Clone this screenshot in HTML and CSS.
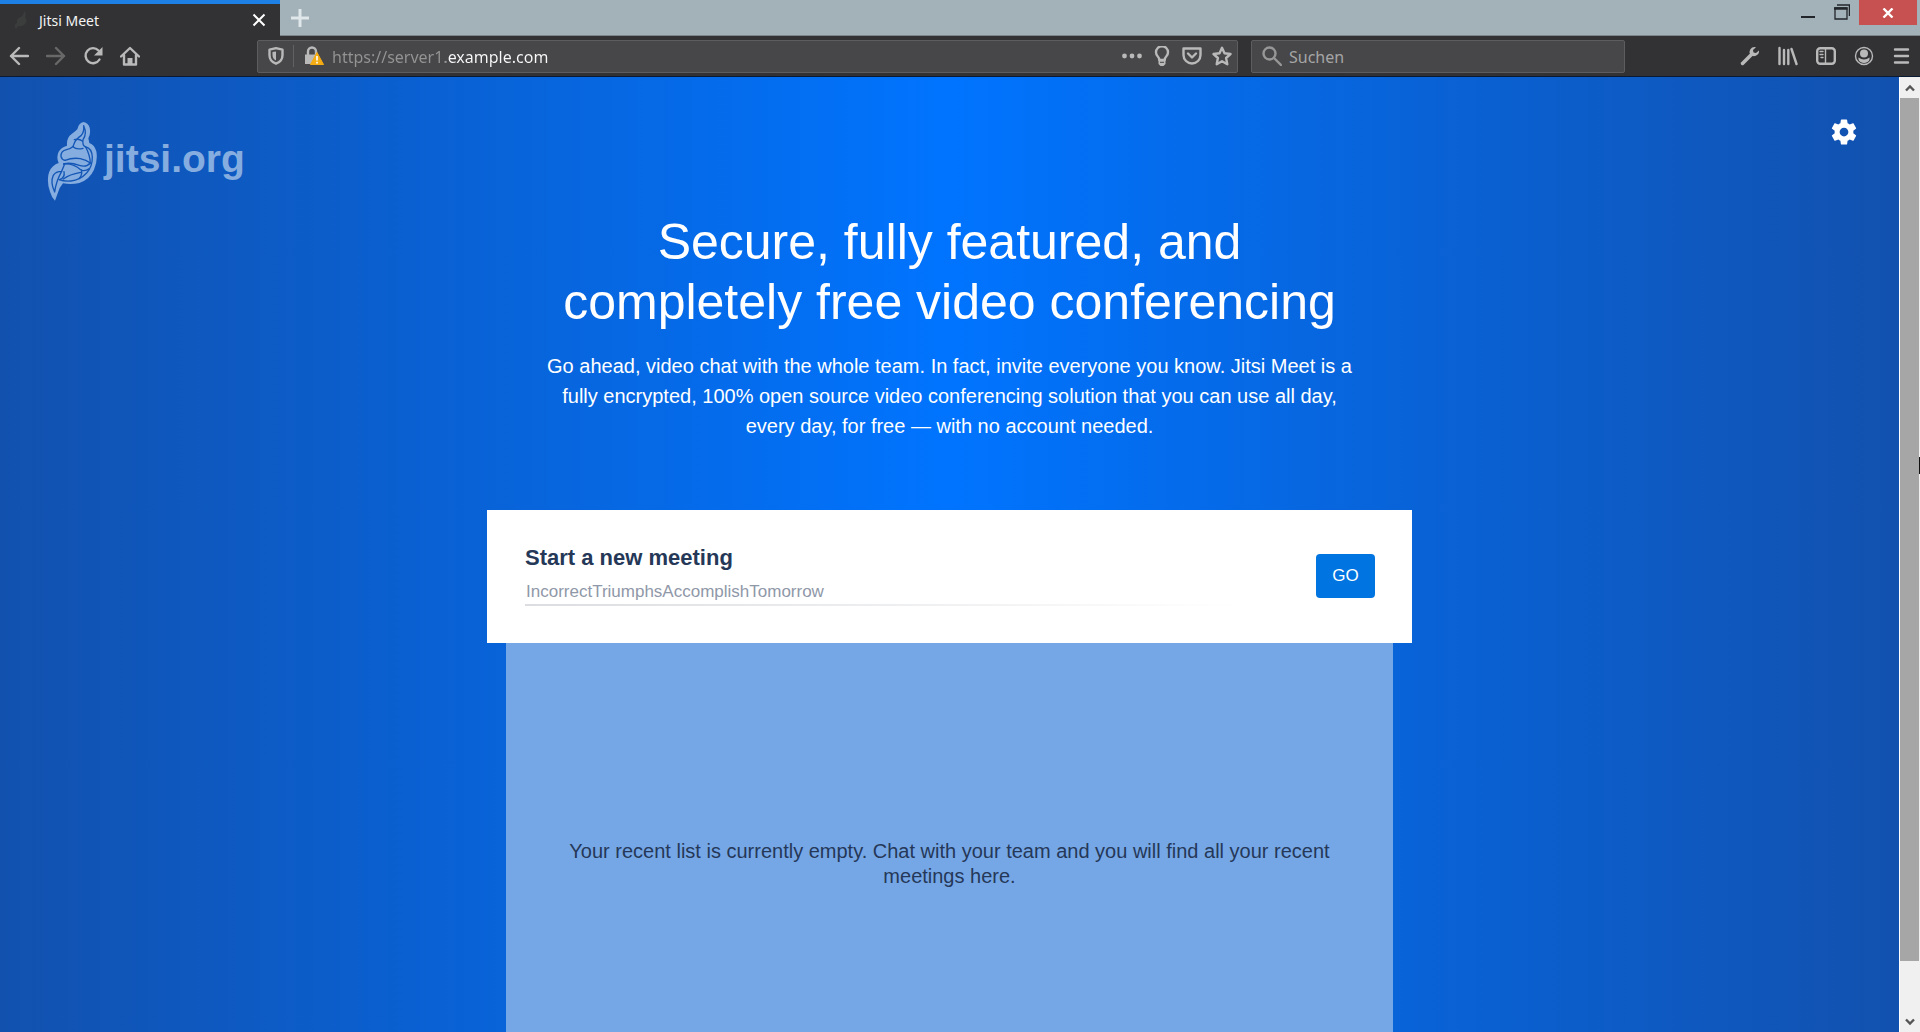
FILE: index.html
```
<!DOCTYPE html>
<html lang="en">
<head>
  <meta charset="UTF-8">
  <meta name="viewport" content="width=device-width, initial-scale=1">
  <title>Jitsi Meet</title>
  <link rel="stylesheet" href="styles.css">
</head>
<body>

<!-- Tab strip -->
<div class="tabstrip">
  <div class="tab">
    <svg class="favicon" width="16" height="20" viewBox="0 0 16 20"><path d="M11 1q3 3 1 6 3 4 0 7-3 3-7 2l-2 3q-3-4 1-6-1-5 4-6 3-2 3-6z" fill="#3b3d3d"/></svg>
    <span class="tab-title">Jitsi Meet</span>
    <button class="tab-close" aria-label="Close tab">
      <svg width="14" height="14" viewBox="0 0 14 14"><path d="M1.500 1.500l11 11M12.500 1.500l-11 11" stroke="#fff" stroke-width="2"/></svg>
    </button>
  </div>
  <button class="tab-new" aria-label="New tab">
    <svg width="18" height="18" viewBox="0 0 18 18"><path d="M9 0v18M0 9h18" stroke="#dfe7ea" stroke-width="3"/></svg>
  </button>
  <div class="window-buttons">
    <button class="win minimize" aria-label="Minimize"><svg width="14" height="16" viewBox="0 0 14 16"><path d="M0 13h14" stroke="#22262b" stroke-width="2"/></svg></button>
    <button class="win restore" aria-label="Restore"><svg width="16" height="16" viewBox="0 0 16 16"><path d="M3 1h12.500v11" stroke="#22262b" stroke-width="1.500" fill="none"/><path d="M1 4h12v11H1z" stroke="#22262b" fill="none" stroke-width="1.300"/><path d="M0 4.500h13.500" stroke="#22262b" stroke-width="2.500"/></svg></button>
    <button class="win close" aria-label="Close"><svg width="12" height="10" viewBox="0 0 12 10"><path d="M1.500 0.500l9 9M10.500 0.500l-9 9" stroke="#fff" stroke-width="2.400"/></svg></button>
  </div>
</div>

<!-- Toolbar -->
<div class="toolbar">
  <div class="nav-buttons">
    <button aria-label="Back"><svg width="20" height="20" viewBox="0 0 20 20"><path d="M19 10H2M10 2l-8 8 8 8" class="line"/></svg></button>
    <button class="disabled" aria-label="Forward" disabled><svg width="20" height="20" viewBox="0 0 20 20"><path d="M1 10h17M10 2l8 8-8 8" class="line"/></svg></button>
    <button aria-label="Reload"><svg width="20" height="20" viewBox="0 0 20 20"><path d="M16.500 13.500A7.500 7.500 0 1 1 15.500 4.500" class="line"/><path d="M19.500 1v8.500H11z" class="solid"/></svg></button>
    <button aria-label="Home"><svg width="20" height="20" viewBox="0 0 20 20"><path d="M1 10.500L10 2l9 8.500M4 9v9.500h12V9" class="line"/><path d="M7.500 19v-7h5v7z" class="solid"/></svg></button>
  </div>

  <div class="urlbar">
    <svg class="shield" width="16" height="18" viewBox="0 0 16 18"><path d="M8 1.200l6.500 1.500v5.500q0 6-6.500 8.500-6.500-2.500-6.500-8.500V2.700z" class="line"/><path d="M8 4.500v9q-3.500-2-3.500-5.500V5z" class="solid"/></svg>
    <span class="divider"></span>
    <svg class="lock" width="20" height="20" viewBox="0 0 20 20"><path d="M4 9V5.500a4 4 0 0 1 8 0V9" class="line"/><path d="M1 8.500h13v9.500H1z" class="solid"/><path d="M13 6.500l6.500 12h-13z" fill="#f5ab12" stroke="#f5ab12" stroke-linejoin="round"/><path d="M13 10v4.500M13 15.800v1.700" stroke="#fff" stroke-width="1.600"/></svg>
    <input class="url" type="text" aria-label="Address" value="https://server1.example.com">
    <div class="url-actions">
      <button aria-label="Page actions"><svg width="20" height="20" viewBox="0 0 20 20"><g class="solid"><circle cx="2.500" cy="10" r="2.400"/><circle cx="10" cy="10" r="2.400"/><circle cx="17.500" cy="10" r="2.400"/></g></svg></button>
      <button aria-label="Tips"><svg width="20" height="20" viewBox="0 0 20 20"><path d="M7.300 14q0-2-1.500-3.500A6 6 0 1 1 14.200 10.500Q12.700 12 12.700 14z" class="line"/><path d="M6.500 14h7v4l-2 2h-3l-2-2z" class="solid"/><path d="M8 16.300h4" stroke="#474749"/></svg></button>
      <button aria-label="Save to Pocket"><svg width="20" height="20" viewBox="0 0 20 20"><path d="M1.500 2.500h17v6.500a8.500 8.500 0 0 1-17 0z" class="line"/><path d="M6 7.500l4 4 4-4" class="line"/></svg></button>
      <button aria-label="Bookmark"><svg width="20" height="20" viewBox="0 0 20 20"><path d="M10 1.800l2.500 5.400 6 .8-4.400 4 1.200 6.200L10 15.200l-5.300 3L5.900 12 1.500 8l6-.8z" class="line"/></svg></button>
    </div>
  </div>

  <div class="searchbar">
    <svg class="magnifier" width="20" height="20" viewBox="0 0 20 20"><circle cx="7.500" cy="7.500" r="6" class="line"/><path d="M12 12l7 7" class="line"/></svg>
    <input class="search" type="text" aria-label="Search" placeholder="Suchen">
  </div>

  <div class="tool-buttons">
    <button aria-label="Tools"><svg width="20" height="20" viewBox="0 0 20 20"><path d="M2.500 17.500L12 8" class="line thick"/><path d="M14.500 1A5 5 0 0 0 10 8a5 5 0 0 0 9-3.500l-3 2.500-2.500-.5-.5-2.500L16 1.200z" class="solid"/></svg></button>
    <button aria-label="Library"><svg width="20" height="20" viewBox="0 0 20 20"><path d="M1.500 2v16M6 4v14M10.300 4v14M13.500 3l5 15" class="line"/></svg></button>
    <button aria-label="Sidebar"><svg width="20" height="20" viewBox="0 0 20 20"><rect x="1.200" y="2.200" width="17.600" height="15.600" rx="3" class="line"/><path d="M9.500 2v16" class="line thin"/><path d="M4 5.500H7M4 8.500H7M5 11.500H7" class="line thin"/></svg></button>
    <button aria-label="Account"><svg width="20" height="20" viewBox="0 0 20 20"><circle cx="10" cy="10" r="8.500" class="line thin"/><circle cx="10" cy="7.500" r="4" class="solid"/><path d="M4.500 11.500q5.500 4 11 0 .5 3-2 4.500-3.500 2-7 0-2.500-1.500-2-4.500z" class="solid"/></svg></button>
    <button aria-label="Menu"><svg width="20" height="20" viewBox="0 0 20 20"><path d="M3 3.500h13M3 10h13M3 16.500h13" class="line"/></svg></button>
  </div>
</div>

<!-- Page + scrollbar -->
<div class="viewport">
  <main class="welcome">
    <a class="logo" href="#">
      <svg width="50" height="80" viewBox="0 0 150 240">
        <path fill="#86addf" d="M110 3q14 3 18 17 4 18-4 32l3 14q16 6 21 25 5 28-7 55-13 29-44 40-24 6-49 1l-10 14q-6 16-14 38-10-10-15-27-9-22-5-50 5-22 22-32l9-4q-8-18 0-34 8-14 25-18-2-24 14-35 13-9 17-14 4-20 19-22z"/>
        <g fill="none" stroke="#1356b6" stroke-width="4" stroke-linejoin="round" stroke-linecap="round">
          <path d="M110 14q2 20-8 30-18 12-23 30M110 14q11 24-2 42-3 18 8 22"/>
          <path d="M82 56q14-4 24 4M78 77q10 10 30 5"/>
          <path d="M79 76q-10 9-20 10-18 4-17 20 2 10 12 12"/>
          <path d="M116 78q19 4 20 31 0 28-17 47-20 21-47 24-21 2-35-4"/>
          <path d="M116 78q13 24 14 48-12 14-33 7-28-10-47-4"/>
          <path d="M54 118q24-9 46-5 18 4 30 13M50 129q28-3 52 18 12 5 24-4"/>
          <path d="M44 151q-18 0-25 12-10 21 4 50 4-32 21-62M37 176q18-5 14-24"/>
          <path d="M44 151q4-10 8-20M104 147q2 16-8 26"/>
          <path d="M49 174q18-14 52-20"/>
        </g>
      </svg>
      <span class="logo-text">jitsi.org</span>
    </a>
    <button class="settings" aria-label="Settings">
      <svg width="30" height="30" viewBox="0 0 24 24"><path fill="#fff" d="M19.430 12.980c.04-.32.07-.64.07-.98s-.03-.66-.07-.98l2.110-1.650c.19-.15.24-.42.12-.64l-2-3.460c-.12-.22-.39-.3-.61-.22l-2.490 1c-.52-.4-1.080-.73-1.690-.98l-.38-2.650C14.460 2.180 14.250 2 14 2h-4c-.25 0-.46.18-.49.42l-.38 2.650c-.61.25-1.170.59-1.690.98l-2.490-1c-.23-.09-.49 0-.61.22l-2 3.460c-.13.22-.07.49.12.64l2.110 1.650c-.04.32-.07.65-.07.98s.03.66.07.98l-2.110 1.650c-.19.15-.24.42-.12.64l2 3.460c.12.22.39.3.61.22l2.490-1c.52.4 1.080.73 1.690.98l.38 2.650c.03.24.24.42.49.42h4c.25 0 .46-.18.49-.42l.38-2.650c.61-.25 1.170-.59 1.690-.98l2.490 1c.23.09.49 0 .61-.22l2-3.460c.12-.22.07-.49-.12-.64l-2.110-1.650zM12 15.500c-1.930 0-3.500-1.570-3.500-3.500s1.570-3.500 3.500-3.500 3.500 1.570 3.500 3.500-1.570 3.500-3.500 3.500z"/></svg>
    </button>

    <div class="header">
      <h1>Secure, fully featured, and completely free video conferencing</h1>
      <p>Go ahead, video chat with the whole team. In fact, invite everyone you know. Jitsi Meet is a fully encrypted, 100% open source video conferencing solution that you can use all day, every day, for free — with no account needed.</p>
    </div>

    <form class="enter-room" onsubmit="return false">
      <div class="enter-room-input">
        <label for="room">Start a new meeting</label>
        <input id="room" type="text" placeholder="IncorrectTriumphsAccomplishTomorrow">
      </div>
      <button class="go" type="submit">GO</button>
    </form>

    <div class="recent">
      <p>Your recent list is currently empty. Chat with your team and you will find all your recent meetings here.</p>
    </div>
  </main>

  <div class="scrollbar">
    <button aria-label="Scroll up"><svg width="10" height="8" viewBox="0 0 10 8"><path d="M1 6.500l4-4 4 4" fill="none" stroke="#555" stroke-width="2.400"/></svg></button>
    <div class="track"><div class="thumb"></div></div>
    <button aria-label="Scroll down"><svg width="10" height="8" viewBox="0 0 10 8"><path d="M1 1.500l4 4 4-4" fill="none" stroke="#555" stroke-width="2.400"/></svg></button>
    <span class="pointer"></span>
  </div>
</div>

</body>
</html>
```
FILE: styles.css
```
* {
  box-sizing: border-box;
}

body {
  margin: 0;
  height: 100vh;
  display: flex;
  flex-direction: column;
  overflow: hidden;
  background: #323234;
  font-family: "Noto Sans", "Open Sans", sans-serif;
}

button {
  display: flex;
  align-items: center;
  justify-content: center;
  padding: 0;
  border: none;
  background: none;
  cursor: pointer;
}

svg {
  display: block;
  flex: none;
}

.line {
  fill: none;
  stroke: #b9b9ba;
  stroke-width: 2.4;
  stroke-linejoin: round;
  stroke-linecap: round;
}

.line.thick {
  stroke-width: 3.5;
}

.line.thin {
  stroke-width: 1.4;
}

.solid {
  fill: #b9b9ba;
}

/* tab strip */
.tabstrip {
  flex: none;
  display: flex;
  height: 36px;
  background: #a3b1b8;
  border-bottom: 1px solid #7c868b;
}

.tab {
  width: 280px;
  height: 36px;
  display: flex;
  align-items: center;
  padding: 0 14px 0 13px;
  background: #323234;
  border-top: 4px solid #1c80e4;
}

.tab-title {
  flex: 1;
  margin-left: 10px;
  color: #f4f4f4;
  font-size: 14px;
}

.tab-new {
  width: 40px;
}

.window-buttons {
  display: flex;
  align-items: flex-start;
  margin-left: auto;
  padding-right: 3px;
}

.win {
  height: 24px;
  width: 34px;
}

.win.close {
  width: 58px;
  height: 25px;
  background: #c75050;
}

/* toolbar */
.toolbar {
  flex: none;
  display: flex;
  align-items: center;
  height: 41px;
  padding-right: 8px;
  border-bottom: 1px solid #0b1a33;
}

.nav-buttons {
  display: flex;
  width: 257px;
}

.nav-buttons button {
  width: 37px;
}

.nav-buttons .disabled {
  opacity: 0.4;
}

.urlbar,
.searchbar {
  display: flex;
  align-items: center;
  height: 33px;
  background: #474749;
  border: 1px solid #5d5d5f;
  border-radius: 2px;
}

.urlbar {
  flex: 1;
  padding: 0 5px 0 10px;
}

.divider {
  width: 1px;
  height: 22px;
  margin: 0 10px 0 9px;
  background: #616163;
}

.url,
.search {
  flex: 1;
  min-width: 0;
  padding: 2px 0 0;
  border: none;
  outline: none;
  background: none;
  font-family: inherit;
  font-size: 16px;
}

/* grey up to the domain, white after it */
.url {
  margin-left: 8px;
  background: linear-gradient(to right, #949495 114px, #f9f9fa 114px);
  -webkit-background-clip: text;
  background-clip: text;
  color: #f9f9fa;
  -webkit-text-fill-color: transparent;
}

.url-actions {
  display: flex;
  gap: 10px;
}

.searchbar {
  width: 374px;
  margin-left: 13px;
  padding: 0 10px;
}

.magnifier {
  opacity: 0.7;
}

.search {
  margin-left: 7px;
  color: #f9f9fa;
}

.search::placeholder {
  color: #a5a5a6;
  opacity: 1;
}

.tool-buttons {
  display: flex;
  gap: 18px;
  margin-left: 115px;
}

/* page */
.viewport {
  flex: 1;
  min-height: 0;
  display: flex;
}

.welcome {
  position: relative;
  flex: 1;
  display: flex;
  flex-direction: column;
  align-items: center;
  padding-top: 135px;
  overflow: hidden;
  background: linear-gradient(to right, #1251ae, #0074ff 50%, #1251ae);
  color: #fff;
  font-family: "Liberation Sans", Arial, sans-serif;
}

.logo {
  position: absolute;
  top: 44px;
  left: 47px;
  display: flex;
  align-items: center;
  gap: 7px;
  color: #86addf;
  text-decoration: none;
}

.logo-text {
  padding-bottom: 4px;
  font-size: 39px;
  font-weight: bold;
  line-height: 72px;
}

.settings {
  position: absolute;
  top: 40px;
  right: 40px;
}

.header {
  width: 820px;
  max-width: 100%;
  text-align: center;
}

.header h1 {
  max-width: 800px;
  margin: 0 auto 19px;
  font-size: 50px;
  font-weight: normal;
  line-height: 60px;
}

.header p {
  margin: 0;
  font-size: 20px;
  line-height: 30px;
}

.enter-room {
  display: flex;
  align-items: center;
  width: 925px;
  max-width: 100%;
  margin-top: 69px;
  padding: 33px 37px 37px 38px;
  background: #fff;
}

.enter-room-input {
  flex: 1;
  margin-right: 76px;
}

.enter-room label {
  display: block;
  color: #253858;
  font-size: 22px;
  font-weight: bold;
  line-height: 30px;
}

.enter-room input {
  display: block;
  width: 100%;
  height: 33px;
  padding: 6px 1px 0;
  border: none;
  border-bottom: 2px solid;
  border-image: linear-gradient(to right, #dcdde0, #fff) 1;
  outline: none;
  color: #253858;
  font-family: inherit;
  font-size: 17px;
}

.enter-room input::placeholder {
  color: #8f98a8;
  opacity: 1;
}

.go {
  width: 59px;
  height: 44px;
  margin-top: 3px;
  border-radius: 4px;
  background: #0074e0;
  color: #fff;
  font-family: inherit;
  font-size: 17px;
}

.recent {
  flex: 1;
  width: 887px;
  max-width: 100%;
  padding: 196px 50px 0;
  background: #75a7e7;
  color: #253858;
  text-align: center;
}

.recent p {
  margin: 0;
  font-size: 20px;
  line-height: 25px;
}

/* scrollbar */
.scrollbar {
  position: relative;
  width: 21px;
  display: flex;
  flex-direction: column;
  background: #f0f0f1;
  border-left: 1px solid #fff;
}

.scrollbar button {
  height: 21px;
}

.track {
  flex: 1;
}

.thumb {
  height: 94.500%;
  margin-right: 1px;
  background: #a6a6a6;
}

/* edge of the mouse pointer */
.pointer {
  position: absolute;
  top: 380px;
  right: 0;
  width: 1px;
  height: 17px;
  background: #111;
}
```
